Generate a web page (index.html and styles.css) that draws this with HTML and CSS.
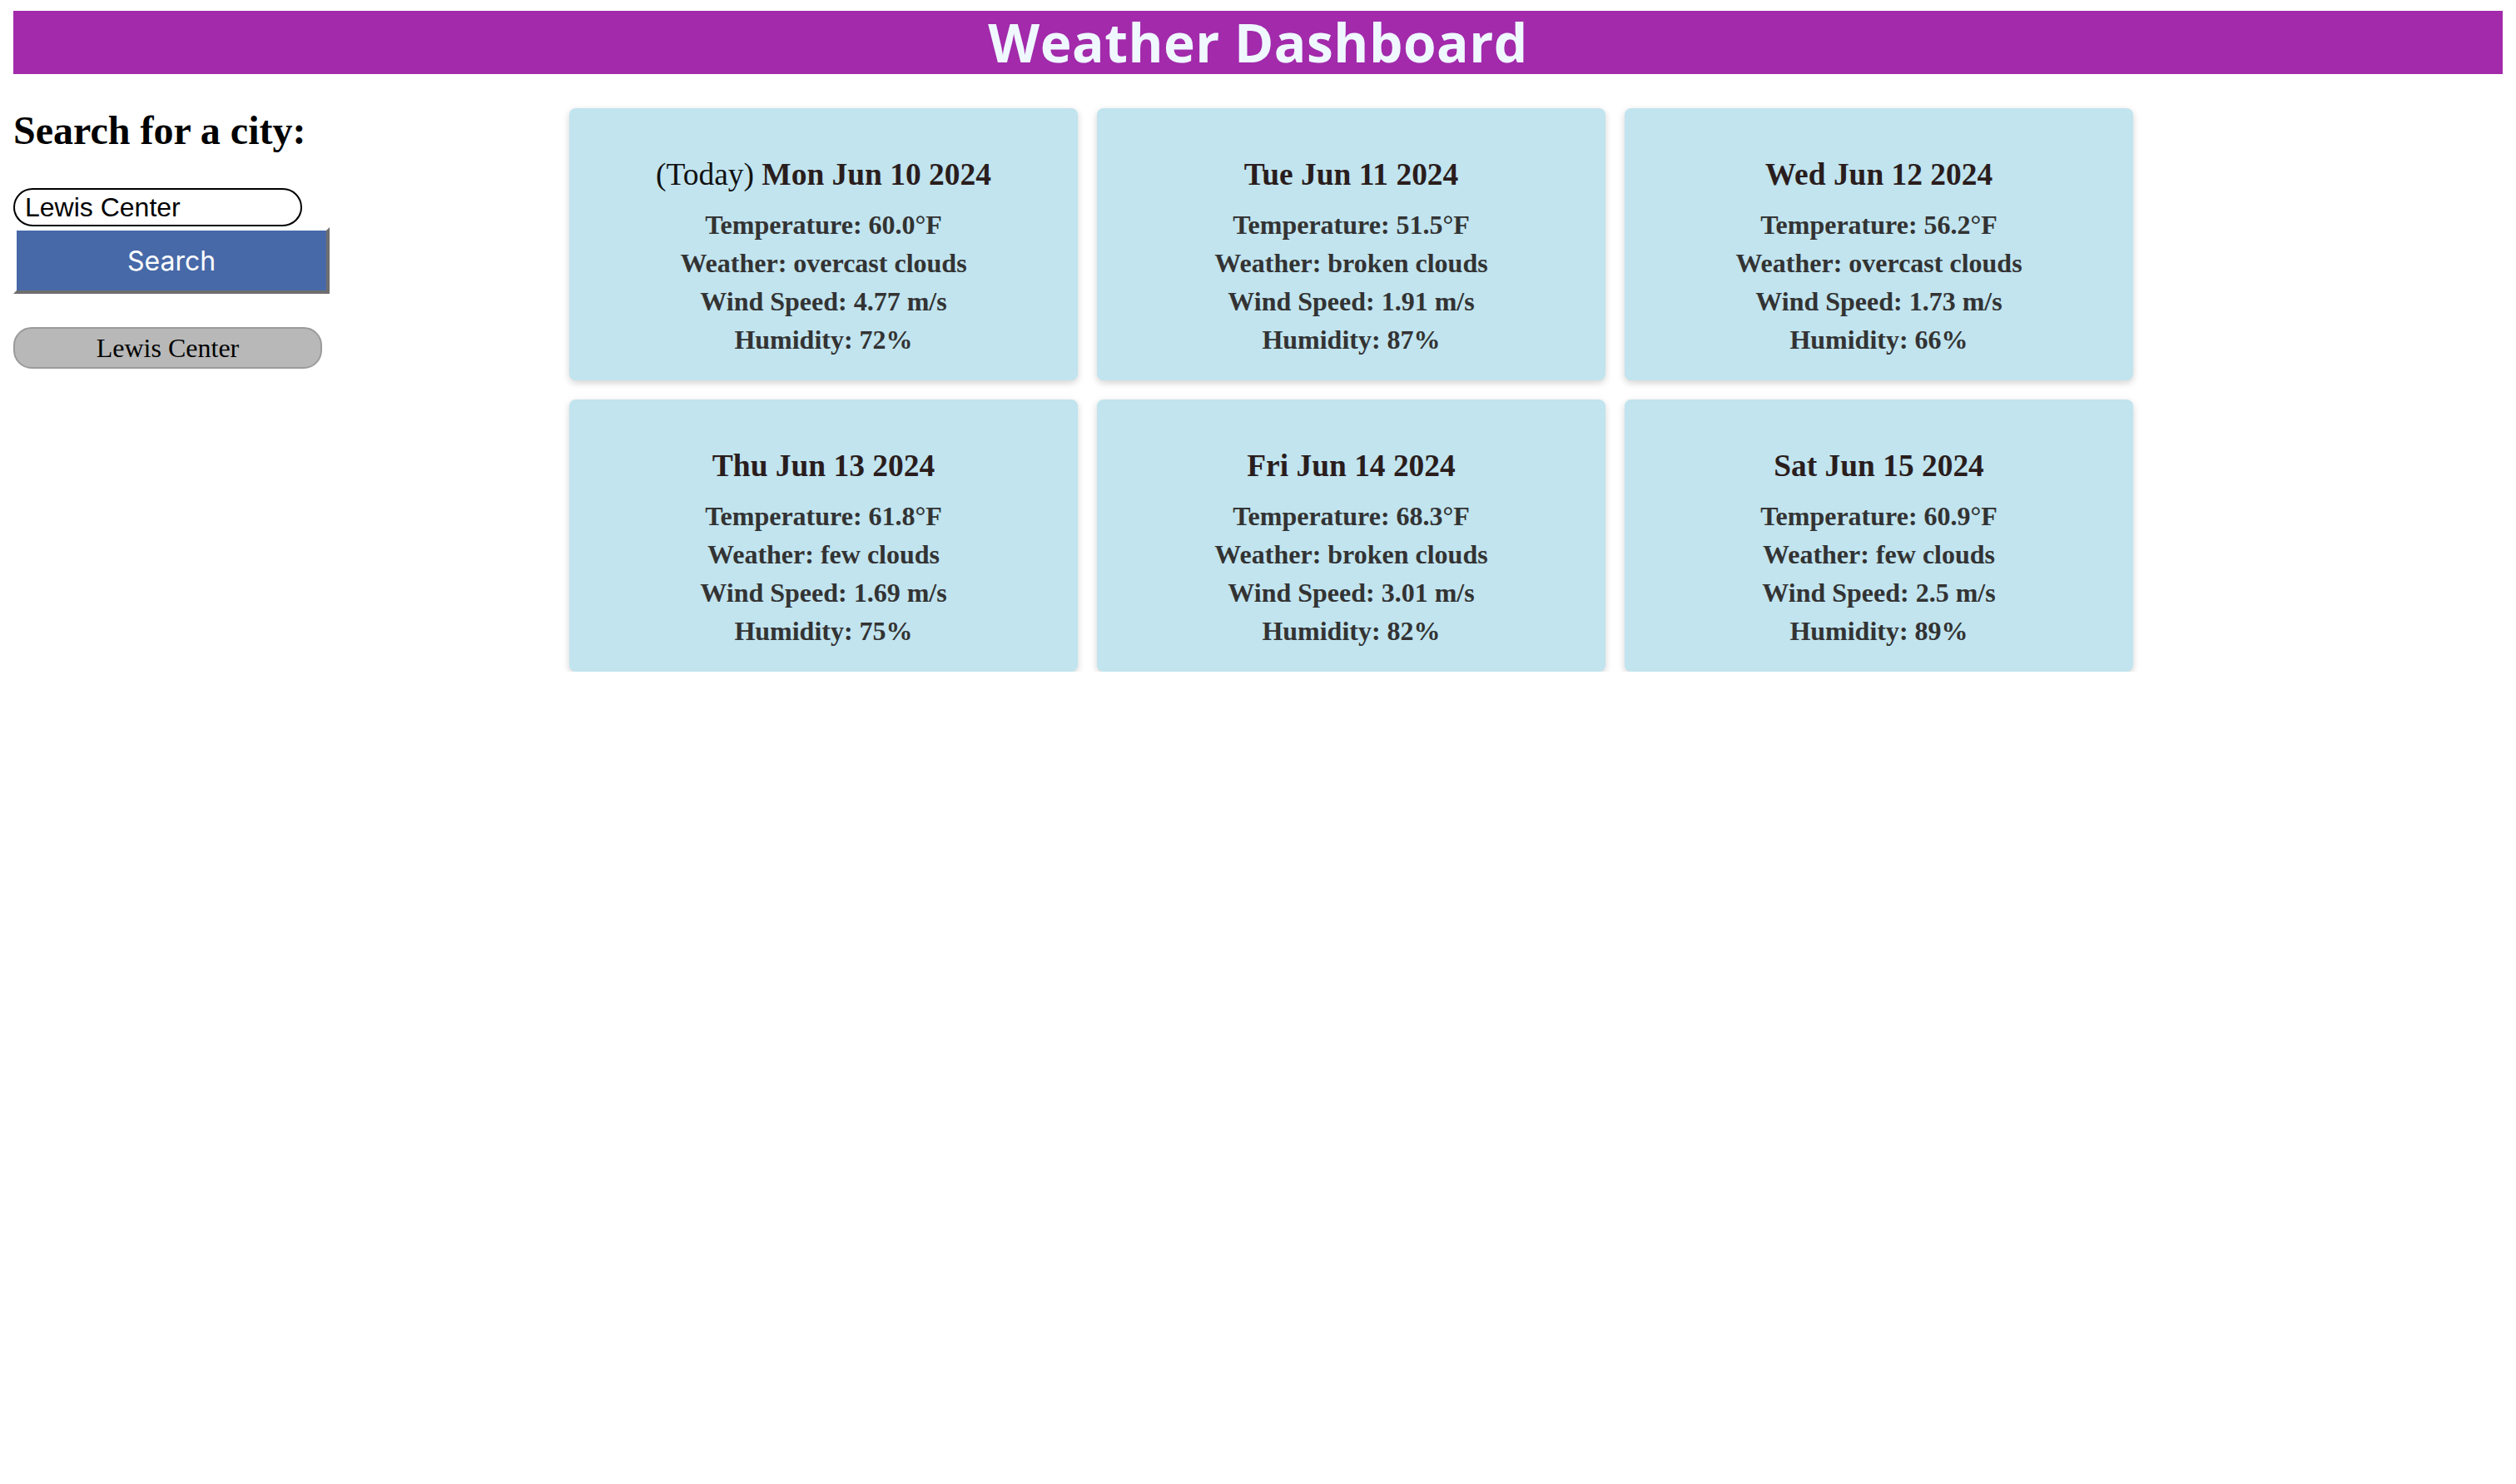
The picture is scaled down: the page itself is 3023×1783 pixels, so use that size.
FILE: index.html
```html
<!DOCTYPE html>
<html lang="en">
<head>
<meta charset="utf-8">
<title>Weather Dashboard</title>
<link rel="stylesheet" href="styles.css">
</head>
<body>
<header class="top-bar">
  <h1 class="title">Weather Dashboard</h1>
</header>
<main class="layout">
  <aside class="sidebar">
    <h2 class="search-heading">Search for a city:</h2>
    <input class="city-input" type="text" value="Lewis Center">
    <button class="search-btn">Search</button>
    <div class="history">
      <button class="history-btn">Lewis Center</button>
    </div>
  </aside>
  <section class="forecast">
    <div class="card">
      <h3 class="card-title"><span class="today">(Today)</span> Mon Jun 10 2024</h3>
      <p class="detail">Temperature: 60.0°F</p>
      <p class="detail">Weather: overcast clouds</p>
      <p class="detail">Wind Speed: 4.77 m/s</p>
      <p class="detail">Humidity: 72%</p>
    </div>
    <div class="card">
      <h3 class="card-title">Tue Jun 11 2024</h3>
      <p class="detail">Temperature: 51.5°F</p>
      <p class="detail">Weather: broken clouds</p>
      <p class="detail">Wind Speed: 1.91 m/s</p>
      <p class="detail">Humidity: 87%</p>
    </div>
    <div class="card">
      <h3 class="card-title">Wed Jun 12 2024</h3>
      <p class="detail">Temperature: 56.2°F</p>
      <p class="detail">Weather: overcast clouds</p>
      <p class="detail">Wind Speed: 1.73 m/s</p>
      <p class="detail">Humidity: 66%</p>
    </div>
    <div class="card">
      <h3 class="card-title">Thu Jun 13 2024</h3>
      <p class="detail">Temperature: 61.8°F</p>
      <p class="detail">Weather: few clouds</p>
      <p class="detail">Wind Speed: 1.69 m/s</p>
      <p class="detail">Humidity: 75%</p>
    </div>
    <div class="card">
      <h3 class="card-title">Fri Jun 14 2024</h3>
      <p class="detail">Temperature: 68.3°F</p>
      <p class="detail">Weather: broken clouds</p>
      <p class="detail">Wind Speed: 3.01 m/s</p>
      <p class="detail">Humidity: 82%</p>
    </div>
    <div class="card">
      <h3 class="card-title">Sat Jun 15 2024</h3>
      <p class="detail">Temperature: 60.9°F</p>
      <p class="detail">Weather: few clouds</p>
      <p class="detail">Wind Speed: 2.5 m/s</p>
      <p class="detail">Humidity: 89%</p>
    </div>
  </section>
</main>
</body>
</html>
```
FILE: styles.css
```css
html, body {
  margin: 0;
  padding: 0;
  background: #ffffff;
}

body {
  padding: 13px 16px 0 16px;
  font-family: "Liberation Serif", "Times New Roman", serif;
  font-size: 32px;
  color: #000;
}

.top-bar {
  background: #a22aab;
  height: 76px;
  display: flex;
  align-items: center;
  justify-content: center;
}

.title {
  margin: 0;
  font-family: "Open Sans", "DejaVu Sans", sans-serif;
  font-weight: 700;
  font-size: 64px;
  letter-spacing: 0.5px;
  line-height: 76px;
  color: #f0f8ff;
}

.layout {
  display: flex;
  align-items: flex-start;
  padding-top: 40px;
}

.sidebar {
  flex: 0 0 668px;
  display: flex;
  flex-direction: column;
  align-items: flex-start;
}

.search-heading {
  margin: 0 0 42px 0;
  font-size: 48px;
  font-weight: 700;
  line-height: 55px;
}

.city-input {
  box-sizing: border-box;
  width: 347px;
  height: 46px;
  margin: 0;
  padding: 0 12px;
  border: 2px solid #000;
  border-radius: 23px;
  font-family: "Liberation Sans", Arial, sans-serif;
  font-size: 32px;
  color: #000;
  background: #fff;
  outline: none;
}

.search-btn {
  box-sizing: border-box;
  width: 380px;
  height: 80px;
  margin: 1px 0 0 0;
  border-style: solid;
  border-width: 4px;
  border-color: #ffffff #6e6e6e #6e6e6e #ffffff;
  background: #4769a8;
  color: #ffffff;
  font-family: "Inter", "Liberation Sans", sans-serif;
  font-size: 32px;
  padding: 0;
}

.history {
  margin-top: 40px;
}

.history-btn {
  box-sizing: border-box;
  width: 371px;
  height: 50px;
  margin: 0;
  padding: 0;
  background: #b8b8b8;
  border: 2px solid #9a9a9a;
  border-radius: 22px;
  font-family: "Liberation Serif", "Times New Roman", serif;
  font-size: 32px;
  color: #000;
}

.forecast {
  display: grid;
  grid-template-columns: repeat(3, 611px);
  gap: 23px;
  margin-top: 1px;
}

.card {
  background: #c1e4ef;
  border-radius: 8px;
  box-shadow: 0 3px 8px rgba(0, 0, 0, 0.18);
  padding: 58px 0 26px 0;
  text-align: center;
}

.card-title {
  margin: 0 0 16px 0;
  font-size: 37.44px;
  line-height: 43px;
  font-weight: 700;
  color: #2a1d1d;
}

.today {
  font-weight: 400;
  color: #111;
}

.detail {
  margin: 0;
  font-size: 32px;
  line-height: 46px;
  font-weight: 700;
  color: #333333;
}
```
